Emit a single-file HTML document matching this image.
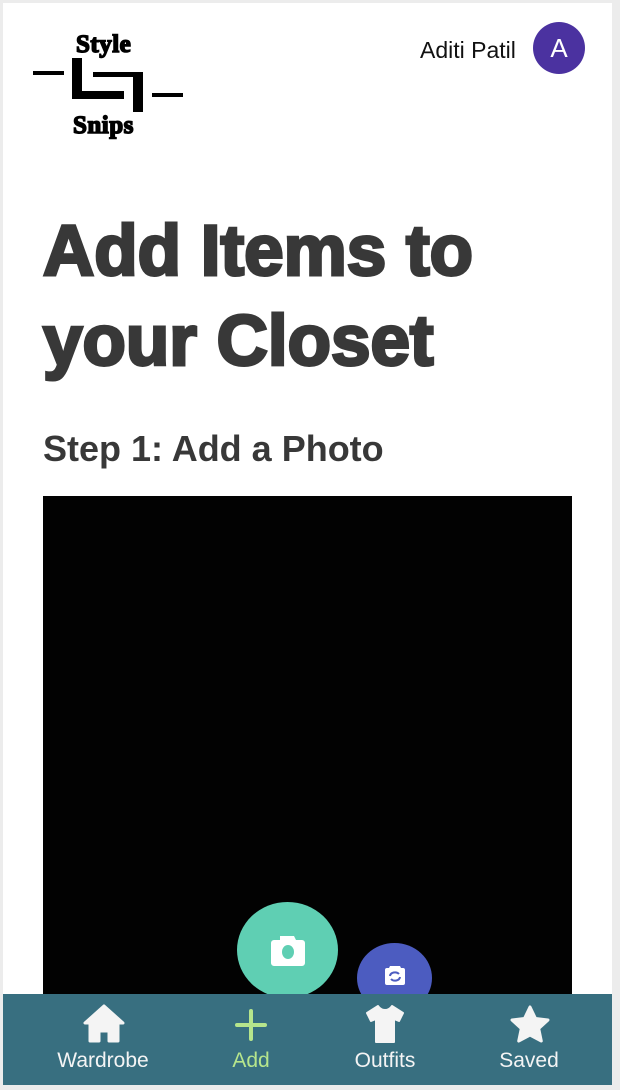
<!DOCTYPE html>
<html><head><meta charset="utf-8"><style>
html,body{margin:0;padding:0}
body{width:620px;height:1090px;background:#ececec;position:relative;overflow:hidden;font-family:"Liberation Sans",sans-serif}
.page{position:absolute;left:3px;top:3px;width:609px;height:1082px;background:#fff;overflow:hidden}
.abs{position:absolute}
.b{background:#000}
.title{left:40px;font-size:71px;font-weight:bold;color:#383838;-webkit-text-stroke:3px #383838;line-height:1;white-space:nowrap}
.tab{position:absolute;top:0;width:152px;text-align:center;color:#f4f4f4;font-size:21px}
.logo{font-family:'Liberation Serif',serif;font-weight:bold;font-size:25px;-webkit-text-stroke:1.5px #000;letter-spacing:0.5px;line-height:1}
</style></head><body>
<div class="page">
  <!-- logo -->
  <div class="abs logo" style="left:73px;top:29px">Style</div>
  <div class="abs b" style="left:30px;top:68px;width:31px;height:4px"></div>
  <div class="abs b" style="left:69px;top:55px;width:10px;height:41px"></div>
  <div class="abs b" style="left:69px;top:88px;width:52px;height:8px"></div>
  <div class="abs b" style="left:90px;top:69px;width:50px;height:5px"></div>
  <div class="abs b" style="left:130px;top:69px;width:10px;height:40px"></div>
  <div class="abs b" style="left:149px;top:90px;width:31px;height:4px"></div>
  <div class="abs logo" style="left:70px;top:110px">Snips</div>
  <!-- user -->
  <div class="abs" style="left:417px;top:34px;font-size:23px;color:#111">Aditi Patil</div>
  <div class="abs" style="left:530px;top:19px;width:52px;height:52px;border-radius:50%;background:#4b32a0;color:#fff;font-size:26px;text-align:center;line-height:52px">A</div>
  <!-- titles -->
  <div class="abs title" style="top:213px">Add Items to</div>
  <div class="abs title" style="top:303px">your Closet</div>
  <div class="abs" style="left:40px;top:425px;font-size:36px;font-weight:bold;color:#383838">Step 1: Add a Photo</div>
  <!-- camera -->
  <div class="abs" style="left:40px;top:493px;width:529px;height:520px;background:#020202"></div>
  <div class="abs" style="left:234px;top:899px;width:101px;height:96px;border-radius:50%;background:#5fcfb3">
    <svg class="abs" style="left:31px;top:30px" width="40" height="36" viewBox="0 0 40 36"><path d="M12 4h14l2 4h6a3 3 0 0 1 3 3v20a3 3 0 0 1-3 3H6a3 3 0 0 1-3-3V11a3 3 0 0 1 3-3h6z" fill="#fff"/><ellipse cx="20" cy="20" rx="6" ry="7" fill="#5fcfb3"/></svg>
  </div>
  <div class="abs" style="left:354px;top:940px;width:75px;height:70px;border-radius:50%;background:#4c5cc0">
    <svg class="abs" style="left:26px;top:20px" width="24" height="24" viewBox="0 0 24 24"><path d="M7 3h10l1 2h2a2 2 0 0 1 2 2v13a2 2 0 0 1-2 2H4a2 2 0 0 1-2-2V7a2 2 0 0 1 2-2h2z" fill="#fff"/><path d="M7 13a5 4 0 0 1 9-2M17 14a5 4 0 0 1-9 2" stroke="#4c5cc0" stroke-width="2" fill="none"/></svg>
  </div>
  <!-- tab bar -->
  <div class="abs" style="left:0;top:991px;width:609px;height:91px;background:#386f80">
    <div class="tab" style="left:24px">
      <svg style="position:absolute;left:54px;top:10px" width="46" height="40" viewBox="0 0 46 40"><path d="M23 2L4 19h5v18h9V27h10v10h9V19h5z" fill="#f4f4f4" stroke="#f4f4f4" stroke-linejoin="round" stroke-width="3"/></svg>
      <div style="position:absolute;top:55px;width:100%">Wardrobe</div>
    </div>
    <div class="tab" style="left:172px">
      <svg style="position:absolute;left:60px;top:15px" width="32" height="32" viewBox="0 0 32 32"><path d="M16 2v28M2 16h28" stroke="#b6e58c" stroke-width="4" stroke-linecap="round"/></svg>
      <div style="position:absolute;top:55px;width:100%;color:#b6e58c">Add</div>
    </div>
    <div class="tab" style="left:306px">
      <svg style="position:absolute;left:54px;top:10px" width="44" height="40" viewBox="0 0 44 40"><path d="M15 2c2 3 4 4 7 4s5-1 7-4l11 7-4 8-5-2v23H13V15l-5 2-4-8z" fill="#f4f4f4" stroke="#f4f4f4" stroke-linejoin="round" stroke-width="2"/></svg>
      <div style="position:absolute;top:55px;width:100%">Outfits</div>
    </div>
    <div class="tab" style="left:450px">
      <svg style="position:absolute;left:56px;top:10px" width="42" height="40" viewBox="0 0 42 40"><path d="M21 3l5.5 11.5 12.5 1.5-9.3 8.5 2.6 12.5L21 31 9.7 37l2.6-12.5L3 16l12.5-1.5z" fill="#f4f4f4" stroke="#f4f4f4" stroke-linejoin="round" stroke-width="3"/></svg>
      <div style="position:absolute;top:55px;width:100%">Saved</div>
    </div>
  </div>
</div>
</body></html>
